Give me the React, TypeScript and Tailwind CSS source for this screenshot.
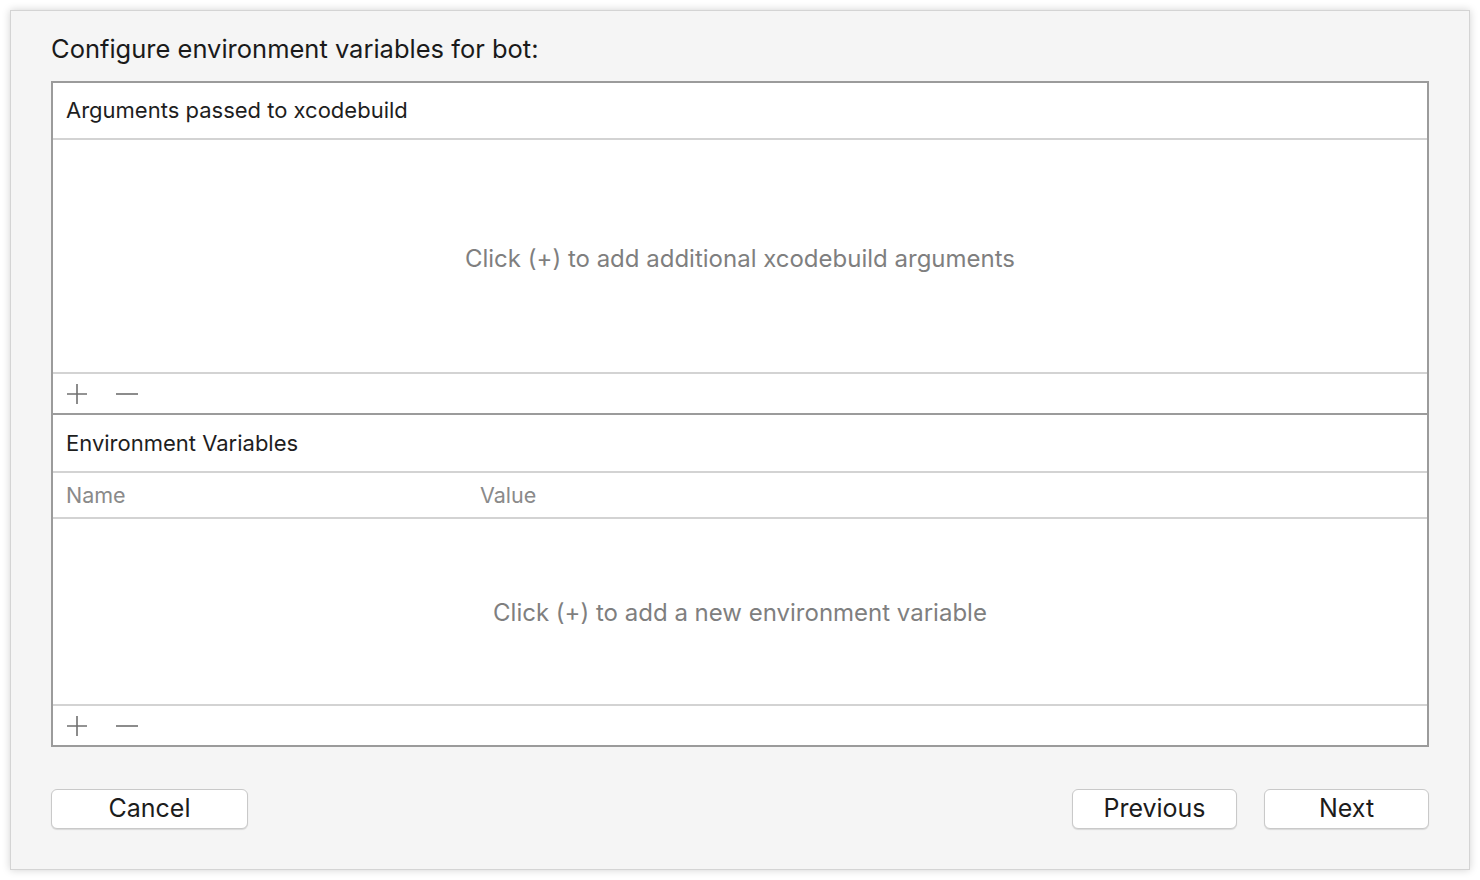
const FONT = { fontFamily: 'Inter, "Noto Sans", sans-serif' };

function PlusMinus() {
  return (
    <div className="flex h-[39px] items-center gap-[28px] pl-[13px]">
      <svg width="22" height="22" viewBox="0 0 22 22" fill="none" stroke="#707070" strokeWidth="1.6">
        <path d="M11 1v20M1 11h20" />
      </svg>
      <svg width="22" height="22" viewBox="0 0 22 22" fill="none" stroke="#707070" strokeWidth="1.6">
        <path d="M0 11h22" />
      </svg>
    </div>
  );
}

function Divider({ dark = false }: { dark?: boolean }) {
  return <div className={dark ? 'h-[2px] bg-[#9b9b9b]' : 'h-[2px] bg-[#d3d3d3]'} />;
}

function Button({ label, width }: { label: string; width: string }) {
  return (
    <button
      className={`${width} h-[40px] rounded-[6px] border border-[#c9c9c9] bg-white text-[25px] text-[#1c1c1c] shadow-[0_1px_1px_rgba(0,0,0,0.12)]`}
    >
      {label}
    </button>
  );
}

export default function App() {
  return (
    <div className="h-[880px] w-full bg-white p-[10px]" style={FONT}>
      <div className="flex h-[860px] flex-col border border-[#d4d4d4] bg-[#f5f5f5] px-[40px] pt-[22px] shadow-[0_0_8px_rgba(0,0,0,0.18)]">
        <div className="h-[32px] text-[25.5px] leading-[32px] text-[#1a1a1a]">
          Configure environment variables for bot:
        </div>

        <div className="mt-[16px] border-2 border-[#9b9b9b] bg-white">
          <div className="flex h-[55px] items-center px-[13px] text-[22px] text-[#1e1e1e]">
            Arguments passed to xcodebuild
          </div>
          <Divider />
          <div className="flex h-[232px] items-center justify-center pt-[5px] text-[24px] text-[#7f7f7f]">
            Click (+) to add additional xcodebuild arguments
          </div>
          <Divider />
          <PlusMinus />
          <Divider dark />

          <div className="flex h-[56px] items-center px-[13px] text-[22px] text-[#1e1e1e]">
            Environment Variables
          </div>
          <Divider />
          <div className="flex h-[44px] items-center px-[13px] text-[21.5px] text-[#8a8a8a]">
            <span className="w-[414px]">Name</span>
            <span>Value</span>
          </div>
          <Divider />
          <div className="flex h-[185px] items-center justify-center pt-[3px] text-[24px] text-[#7f7f7f]">
            Click (+) to add a new environment variable
          </div>
          <Divider />
          <PlusMinus />
        </div>

        <div className="mt-[42px] flex items-center">
          <Button label="Cancel" width="w-[197px]" />
          <div className="flex-1" />
          <div className="flex gap-[27px]">
            <Button label="Previous" width="w-[165px]" />
            <Button label="Next" width="w-[165px]" />
          </div>
        </div>
      </div>
    </div>
  );
}
